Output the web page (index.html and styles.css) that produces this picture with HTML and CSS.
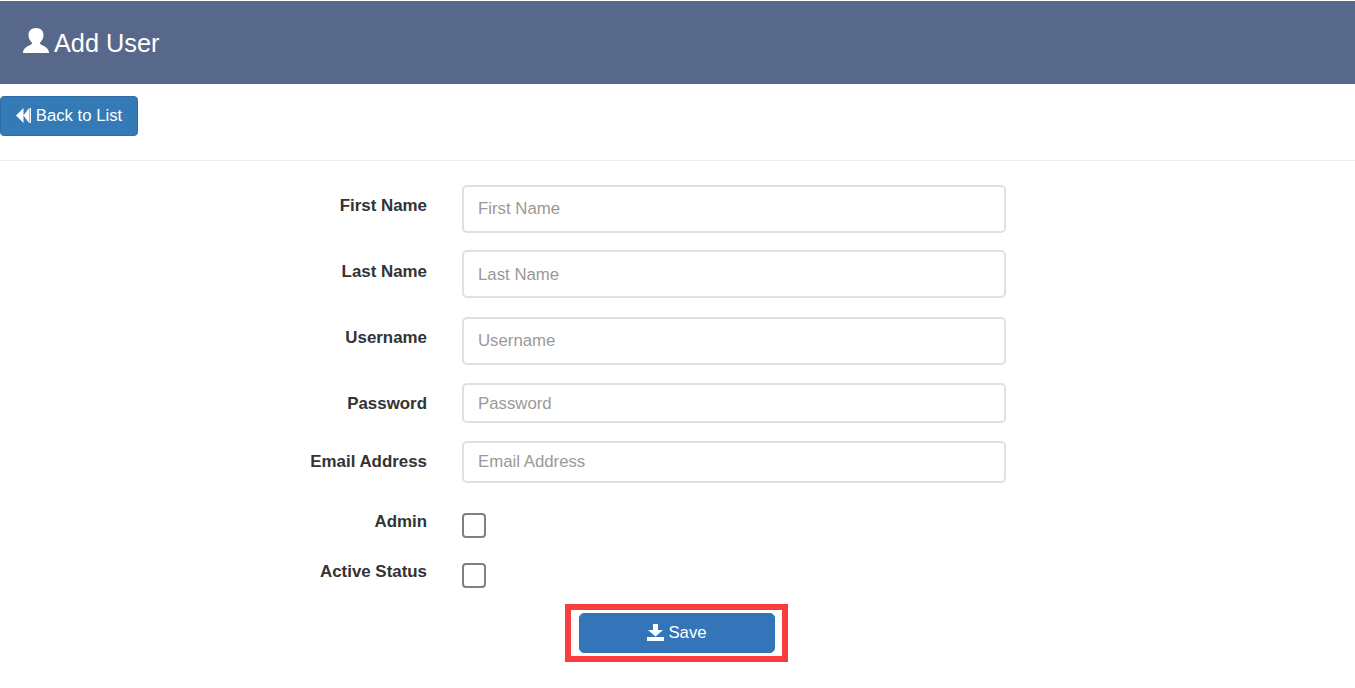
FILE: index.html
```html
<!DOCTYPE html>
<html>
  <head>
    <title>Add User</title>
    <link rel="stylesheet" href="styles.css">
  </head>
  <body>
    <div class="page-header">
      <svg class="user-icon" viewBox="0 0 26 25">
        <path d="M13 0c4.600 0 7.500 2.800 7.500 7 0 3-1.300 5.400-3 7-.8.800-.6 2 .4 2.600 2.400 1.400 8 2.900 8.100 8.400H0c.1-5.500 5.700-7 8.100-8.400 1-.6 1.200-1.800.4-2.600-1.700-1.600-3-4-3-7C5.500 2.800 8.400 0 13 0z" fill="#fff"/>
      </svg>
      <h1>Add User</h1>
    </div>

    <div class="toolbar">
      <a class="btn back-btn" href="#">
        <svg class="back-icon" viewBox="0 0 15 15">
          <path d="M7.500 0v15L0 7.500zM13 0v15L7.500 7.500zM13.500 0H15v15h-1.500z" fill="#fff"/>
        </svg>
        Back to List
      </a>
    </div>

    <form class="user-form">
      <div class="form-row tall row-first">
        <label for="firstName">First Name</label>
        <input type="text" id="firstName" placeholder="First Name" />
      </div>
      <div class="form-row tall row-second">
        <label for="lastName">Last Name</label>
        <input type="text" id="lastName" placeholder="Last Name" />
      </div>
      <div class="form-row tall">
        <label for="username">Username</label>
        <input type="text" id="username" placeholder="Username" />
      </div>
      <div class="form-row short">
        <label for="password">Password</label>
        <input type="text" id="password" placeholder="Password" />
      </div>
      <div class="form-row medium">
        <label for="email">Email Address</label>
        <input type="text" id="email" placeholder="Email Address" />
      </div>
      <div class="form-row check-row">
        <label>Admin</label>
        <span class="check-box"></span>
      </div>
      <div class="form-row check-row">
        <label>Active Status</label>
        <span class="check-box"></span>
      </div>
      <div class="save-wrap">
        <button class="btn save-btn" type="button">
          <svg class="save-icon" viewBox="0 0 17 17">
            <path d="M6 0h5v6h5l-7.500 6.500L1 6h5zM0 13h17v4H0z" fill="#fff"/>
          </svg>
          Save
        </button>
      </div>
    </form>
  </body>
</html>
```

FILE: styles.css
```css
* {
  box-sizing: border-box;
}
body {
  margin: 0;
  font-family: "Liberation Sans", Arial, sans-serif;
  color: #333;
  background: #fff;
}
.page-header {
  height: 83px;
  margin-top: 1px;
  padding-left: 23px;
  display: flex;
  align-items: center;
  background: #58688a;
  color: #fff;
}
.page-header h1 {
  margin: 2px 0 0 5px;
  font-size: 25.3px;
  font-weight: normal;
}
.user-icon {
  width: 26px;
  height: 25px;
  margin-top: -4px;
}
.toolbar {
  padding-top: 12px;
  height: 77px;
  border-bottom: 1px solid #eee;
}
.btn {
  color: #fff;
  background: #337ab7;
  border: 1px solid #2e6da4;
  border-radius: 4px;
  font-family: inherit;
  font-size: 16.7px;
  text-decoration: none;
}
.back-btn {
  width: 138px;
  height: 40px;
  display: flex;
  align-items: center;
  justify-content: center;
  gap: 5px;
}
.back-icon {
  width: 15px;
  height: 15px;
  margin-top: -2px;
}
.user-form {
  padding-top: 24px;
}
.form-row {
  display: flex;
  margin-bottom: 18px;
}
.form-row label {
  width: 427px;
  padding-top: 12px;
  text-align: right;
  font-size: 16.9px;
  line-height: 18px;
  font-weight: bold;
}
.form-row input {
  width: 544px;
  height: 100%;
  margin-left: 35px;
  padding: 0 14px;
  border: 2px solid #e0e0e0;
  border-radius: 5px;
  font-family: inherit;
  font-size: 16.8px;
  color: #555;
}
.form-row input::placeholder {
  color: #999;
}
.tall {
  height: 48px;
}
.row-first {
  margin-bottom: 17px;
}
.row-second {
  margin-bottom: 19px;
}
.row-second label {
  padding-top: 13px;
}
.row-second input,
.short input {
  padding-top: 2px;
}
.short {
  height: 40px;
}
.medium {
  height: 42px;
}
.check-row {
  height: 50px;
  margin-bottom: 0;
}
.check-box {
  width: 24px;
  height: 25px;
  margin: 12px 0 0 35px;
  border: 2px solid #808080;
  border-radius: 4px;
}
.save-wrap {
  width: 223px;
  height: 58px;
  margin: 3px 0 0 565px;
  padding: 3px 8px;
  border: 6px solid #f93c3f;
}
.save-btn {
  width: 196px;
  height: 40px;
  display: flex;
  align-items: center;
  justify-content: center;
  gap: 4px;
  background: #3475b9;
  border-color: #3475b9;
  border-radius: 5px;
}
.save-icon {
  width: 17px;
  height: 17px;
  margin-top: -2px;
}
```
